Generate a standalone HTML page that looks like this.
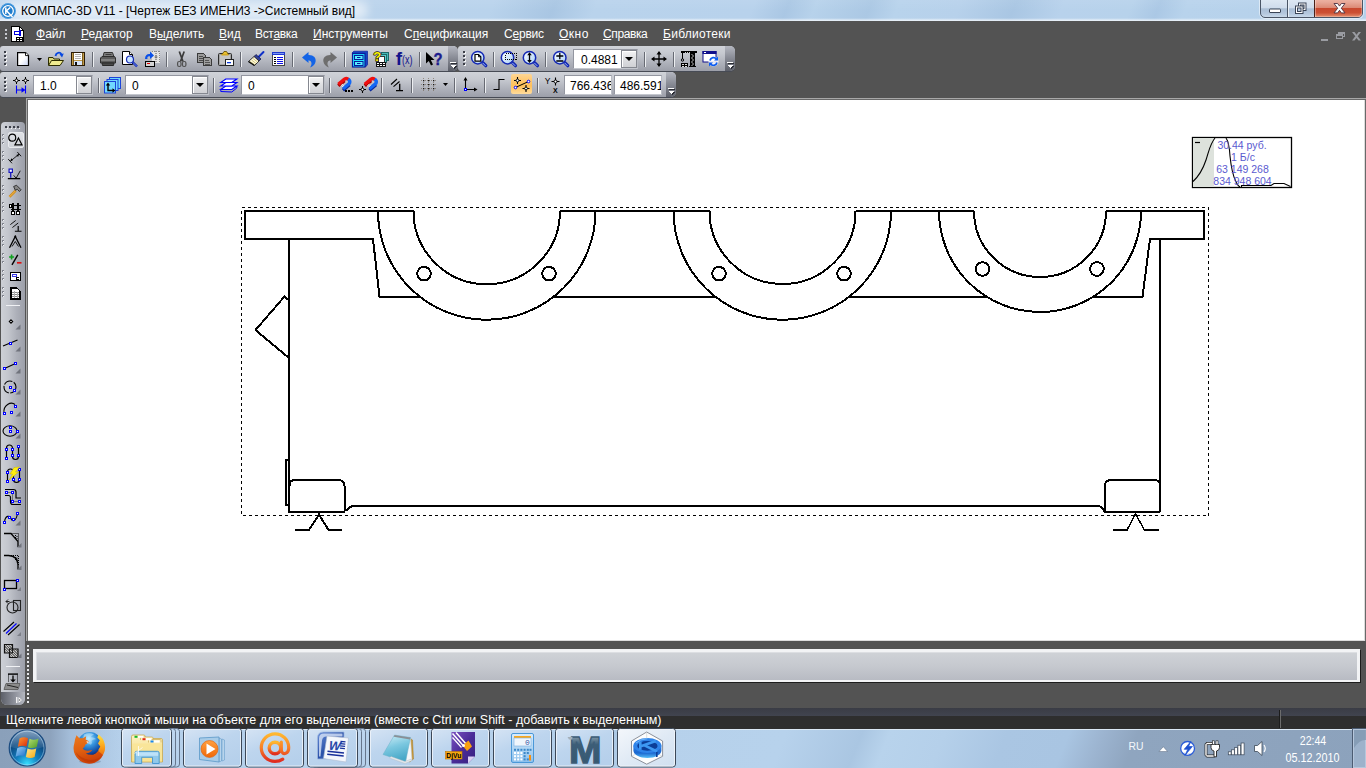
<!DOCTYPE html>
<html lang="ru">
<head>
<meta charset="utf-8">
<title>КОМПАС-3D V11</title>
<style>
html,body{margin:0;padding:0;}
body{width:1366px;height:768px;overflow:hidden;position:relative;background:#535353;font-family:"Liberation Sans","DejaVu Sans",sans-serif;}
.abs{position:absolute;}
svg{position:absolute;overflow:visible;}
#titlebar{left:0;top:0;width:1366px;height:21px;background:linear-gradient(112deg,#c3d8ee 0%,#bcd4ec 22%,#b9d3ec 36%,#a9c6e3 40.5%,#b9d3ec 43.5%,#b8d2ec 55%,#aac7e4 57.5%,#b7d2eb 59.5%,#abc8e4 63.500%,#b8d3ec 65.500%,#b7d1eb 70%,#a9c6e3 74%,#b8d2ec 77.500%,#b7d2eb 82.500%,#abc8e5 84.500%,#b8d3ec 86.500%,#b5d0ea 100%);}
#titlebar .fade{left:0;top:0;width:1366px;height:21px;background:linear-gradient(180deg,rgba(255,255,255,0.06) 0%,rgba(255,255,255,0.0) 50%,rgba(255,255,255,0.0) 86%,rgba(255,255,255,0.6) 96%,rgba(255,255,255,0.7) 100%);}
#title{left:21px;top:3px;font-size:12px;line-height:16px;color:#000;white-space:nowrap;}
#menubar{left:0;top:21px;width:1366px;height:25px;background:#535353;}
.mi{position:absolute;top:26px;font-size:12px;line-height:16px;color:#fff;white-space:nowrap;}
.mi u{text-decoration:underline;text-underline-offset:1px;}
.tb{position:absolute;box-shadow:0 1px 0 #474b55;height:25px;border-radius:3px 5px 5px 3px;background:linear-gradient(180deg,#d0d3d9 0%,#c6c9d0 30%,#b0b3bc 65%,#9c9fa9 100%);overflow:hidden;}
.tb .ov{position:absolute;right:0;top:0;width:10px;height:25px;background:linear-gradient(180deg,#b4b7c0 0%,#8b8e98 45%,#5c5f69 100%);}
.grip{position:absolute;width:3px;height:16px;background:repeating-linear-gradient(180deg,#f4f5f7 0px,#f4f5f7 2px,transparent 2px,transparent 4px);background-position:1px 1px;background-repeat:no-repeat;background-size:2px 15px;}
.grip:after{content:"";position:absolute;left:0;top:0;width:2px;height:14px;background:repeating-linear-gradient(180deg,#3c3f48 0px,#3c3f48 2px,transparent 2px,transparent 4px);}
.gripl{position:absolute;width:2px;height:10px;background:repeating-linear-gradient(180deg,#c8cad0 0px,#c8cad0 2px,transparent 2px,transparent 4px);}
.sep{position:absolute;width:1px;height:15px;background:#676a73;box-shadow:1px 0 0 #eceef1;}
.combo{position:absolute;height:20px;background:#fff;border:1px solid #9396a0;border-right-color:#b9bcc4;border-bottom-color:#c4c7ce;box-sizing:border-box;font-size:12px;line-height:20px;color:#000;white-space:nowrap;overflow:hidden;}
.combo span{position:absolute;top:0;}
.cbtn{position:absolute;right:0;top:0;width:14px;height:16px;background:linear-gradient(180deg,#f4f4f5,#dedfe2 50%,#d0d1d5);border:1px solid #858890;box-shadow:inset 1px 1px 0 #fff;}
.cbtn:after{content:"";position:absolute;left:3px;top:6px;border:4px solid transparent;border-top:4px solid #000;border-bottom:0;}
#canvas{left:28px;top:100px;width:1336px;height:540px;background:#fff;}
#lefttb{left:1px;top:122px;width:24px;height:583px;border-radius:4px 4px 6px 6px;background:linear-gradient(90deg,#cdd0d6 0%,#c3c6cd 30%,#adb0b9 65%,#9c9fa9 100%);overflow:hidden;}
#bottom{left:0;top:641px;width:1366px;height:68px;background:#535353;}
#panel{left:33px;top:649px;width:1327px;height:33px;box-sizing:border-box;border:3px solid #f2f3f5;border-bottom-width:2px;box-shadow:inset 1px 1px 0 #dcdee2,1px 1px 0 #1c1c1c;background:linear-gradient(180deg,#cfd2d7 0%,#c6c9cf 50%,#b8bbc3 100%);}
#status1{left:0;top:708px;width:1366px;height:8px;background:linear-gradient(180deg,#3a3c45,#41444f);}
#status2{left:0;top:716px;width:1366px;height:13px;background:#2e2e2e;}
#statustext{left:6px;top:712px;font-size:12.5px;line-height:16px;color:#fff;white-space:nowrap;}
#taskbar{left:0;top:729px;width:1366px;height:39px;background:linear-gradient(112deg,#b4cfea 0%,#b7d1eb 30%,#b5d0ea 40%,#aac6e2 44%,#b6d1eb 47%,#b7d2ec 57%,#aac6e2 62.500%,#b8d3ec 64.500%,#b5d0ea 68.500%,#aac6e3 73%,#a9c5e2 77.500%,#9cb4d0 80%,#8fa5bf 82.500%,#8ca2bc 100%);border-top:1px solid #dbe8f5;box-sizing:border-box;}
</style>
</head>
<body>
<svg width="0" height="0" style="left:0;top:0"><defs>
<linearGradient id="gpage" x1="0" y1="0" x2="1" y2="1"><stop offset="0" stop-color="#fff"/><stop offset="0.5" stop-color="#fff"/><stop offset="1" stop-color="#c8d4f4"/></linearGradient>
<linearGradient id="glens" x1="0" y1="0" x2="1" y2="1"><stop offset="0" stop-color="#fff"/><stop offset="1" stop-color="#a8d0f8"/></linearGradient>
<linearGradient id="gov" x1="0" y1="0" x2="0" y2="1"><stop offset="0" stop-color="#ffe7b0"/><stop offset="0.5" stop-color="#ffd078"/><stop offset="1" stop-color="#ffc050"/></linearGradient>
</defs></svg>
<!-- TITLE BAR -->
<div id="titlebar" class="abs"><div class="fade abs"></div></div>
<div class="abs titleglow" style="left:6px;top:1px;width:362px;height:19px;border-radius:10px;background:rgba(255,255,255,0.55);filter:blur(5px)"></div>
<div id="title" class="abs">КОМПАС-3D V11 - [Чертеж БЕЗ ИМЕНИ3 -&gt;Системный вид]</div>
<!-- app logo -->
<svg style="left:0px;top:3px" width="16" height="16" viewBox="0 0 16 16">
<circle cx="8" cy="8" r="7.700" fill="#1f7ccc"/><circle cx="8" cy="8" r="7.300" fill="none" stroke="#58a8e8" stroke-width="0.800"/>
<circle cx="8" cy="8" r="5.300" fill="none" stroke="#fff" stroke-width="1.300"/>
<path d="M5.800 4.500v6.500M6 8.200l4.200-3.700M6.500 7.800l6 6.200" stroke="#fff" stroke-width="1.500" fill="none"/>
</svg>
<!-- window buttons -->
<div class="abs" style="left:1260px;top:-4px;width:103px;height:22px;border:1px solid #4a5566;border-radius:0 0 5px 5px;box-sizing:border-box;background:linear-gradient(180deg,#e2ebf5 0%,#cfdcec 54%,#aabed5 59%,#b4c7dd 82%,#c9d9ea 100%);box-shadow:0 0 0 1px rgba(255,255,255,0.5);"></div>
<div class="abs" style="left:1287px;top:0;width:1px;height:17px;background:#4a5566"></div>
<div class="abs" style="left:1288px;top:0;width:1px;height:17px;background:#e8eff7"></div>
<div class="abs" style="left:1314px;top:0;width:1px;height:17px;background:#4a2018"></div>
<div class="abs" style="left:1315px;top:-4px;width:47px;height:21px;border-radius:0 0 4px 0;background:linear-gradient(180deg,#f4c0b0 0%,#e8a898 30%,#dc8a76 55%,#c8482e 59%,#cc5034 80%,#e49070 100%);box-shadow:inset 1px 0 0 rgba(255,255,255,0.35),inset -1px -1px 0 rgba(255,255,255,0.25);"></div>
<svg style="left:1260px;top:0" width="103" height="18" viewBox="0 0 103 18">
<rect x="9.500" y="9" width="11" height="3.500" rx="0.500" fill="#fff" stroke="#3a4456"/>
<rect x="38.500" y="3" width="7.500" height="7.500" fill="#fff" stroke="#3a4456"/><rect x="40.500" y="5" width="3.500" height="3.500" fill="#c4d3e4" stroke="#3a4456"/>
<rect x="35.500" y="6" width="7.500" height="7.500" fill="#fff" stroke="#3a4456"/><rect x="37.500" y="8" width="3.500" height="3.500" fill="#b9cbe0" stroke="#3a4456"/>
<path d="M74 3.500h3.600l1.900 2.600 1.900-2.600h3.600l-3.700 4.700 3.700 4.700h-3.600l-1.900-2.600-1.900 2.600h-3.600l3.700-4.700z" fill="#fff" stroke="#4a3040" stroke-width="0.900"/>
</svg>
<!-- MENU -->
<div id="menubar" class="abs"></div>
<div class="gripl" style="left:5px;top:29px"></div>
<svg style="left:11px;top:26px" width="13" height="16" viewBox="0 0 13 15" preserveAspectRatio="none" shape-rendering="crispEdges">
<path d="M0.5 0.5h8l4 4v10h-12z" fill="#fff" stroke="#000"/><path d="M8.500 0.500v4h4" fill="#fff" stroke="#000"/>
<rect x="3" y="5" width="6" height="3" fill="#fff" stroke="#0000e0"/><rect x="8" y="4" width="2" height="5" fill="#0000e0"/>
<rect x="5" y="10" width="7" height="4" fill="#000"/><rect x="6" y="11" width="2" height="1" fill="#fff"/><rect x="9" y="11" width="2" height="1" fill="#fff"/><rect x="6" y="13" width="2" height="1" fill="#fff"/><rect x="9" y="13" width="2" height="1" fill="#fff"/>
</svg>
<div class="mi" style="left:36px"><u>Ф</u>айл</div>
<div class="mi" style="left:81px"><u>Р</u>едактор</div>
<div class="mi" style="left:149px">В<u>ы</u>делить</div>
<div class="mi" style="left:219px"><u>В</u>ид</div>
<div class="mi" style="left:255px;letter-spacing:-0.330px">Вст<u>а</u>вка</div>
<div class="mi" style="left:313px"><u>И</u>нструменты</div>
<div class="mi" style="left:404px">С<u>п</u>ецификация</div>
<div class="mi" style="left:504px;letter-spacing:-0.200px">С<u>е</u>рвис</div>
<div class="mi" style="left:559px;letter-spacing:0.500px"><u>О</u>кно</div>
<div class="mi" style="left:603px;letter-spacing:-0.400px"><u>С</u>правка</div>
<div class="mi" style="left:663px;letter-spacing:0.280px"><u>Б</u>иблиотеки</div>
<!-- MDI buttons -->
<svg style="left:1318px;top:30px" width="48" height="12" viewBox="0 0 48 12" shape-rendering="crispEdges">
<rect x="3" y="9" width="7" height="2" fill="#9a9ca2"/>
<rect x="20.500" y="2.500" width="6" height="4" fill="none" stroke="#9a9ca2"/><rect x="20" y="2" width="7" height="2" fill="#9a9ca2"/>
<rect x="18.500" y="4.500" width="6" height="4" fill="#535353" stroke="#9a9ca2"/><rect x="18" y="4" width="7" height="2" fill="#9a9ca2"/>
<path d="M34 2h2.500l2 2.700 2-2.700h2.500l-3.300 4.300 3.300 4.300h-2.500l-2-2.700-2 2.700h-2.500l3.300-4.300z" fill="#9a9ca2" shape-rendering="auto"/>
</svg>
<!-- TOOLBARS ROW 1 -->
<div class="tb" style="left:0;top:46px;width:458px"><div class="ov"></div></div>
<div class="tb" style="left:458px;top:46px;width:277px"><div class="ov"></div></div>
<div class="tb" style="left:0;top:72px;width:676px"><div class="ov"></div></div>
<div class="grip" style="left:4px;top:51px"></div>
<div class="grip" style="left:463px;top:51px"></div>
<div class="grip" style="left:4px;top:77px"></div>
<!-- overflow glyphs -->
<svg style="left:450px;top:62px" width="8" height="8" viewBox="0 0 8 8" shape-rendering="crispEdges"><rect x="1" y="1" width="6" height="1" fill="#2a2c33"/><path d="M1 4h6l-3 3z" fill="#2a2c33"/><rect x="0" y="0" width="6" height="1" fill="#fff"/><path d="M0 3h6l-3 3z" fill="#fff"/></svg>
<svg style="left:727px;top:62px" width="8" height="8" viewBox="0 0 8 8" shape-rendering="crispEdges"><rect x="1" y="1" width="6" height="1" fill="#2a2c33"/><path d="M1 4h6l-3 3z" fill="#2a2c33"/><rect x="0" y="0" width="6" height="1" fill="#fff"/><path d="M0 3h6l-3 3z" fill="#fff"/></svg>
<svg style="left:668px;top:88px" width="8" height="8" viewBox="0 0 8 8" shape-rendering="crispEdges"><rect x="1" y="1" width="6" height="1" fill="#2a2c33"/><path d="M1 4h6l-3 3z" fill="#2a2c33"/><rect x="0" y="0" width="6" height="1" fill="#fff"/><path d="M0 3h6l-3 3z" fill="#fff"/></svg>
<!-- separators row1 -->
<div class="sep" style="left:92px;top:52px"></div>
<div class="sep" style="left:166px;top:52px"></div>
<div class="sep" style="left:240px;top:52px"></div>
<div class="sep" style="left:292px;top:52px"></div>
<div class="sep" style="left:344px;top:52px"></div>
<div class="sep" style="left:419px;top:52px"></div>
<div class="sep" style="left:493px;top:52px"></div>
<div class="sep" style="left:545px;top:52px"></div>
<div class="sep" style="left:644px;top:52px"></div>
<div class="sep" style="left:673px;top:52px"></div>
<!-- separators row2 -->
<div class="sep" style="left:98px;top:78px"></div>
<div class="sep" style="left:213px;top:78px"></div>
<div class="sep" style="left:329px;top:78px"></div>
<div class="sep" style="left:381px;top:78px"></div>
<div class="sep" style="left:411px;top:78px"></div>
<div class="sep" style="left:454px;top:78px"></div>
<div class="sep" style="left:484px;top:78px"></div>
<div class="sep" style="left:537px;top:78px"></div>
<!-- combos -->
<div class="combo" style="left:573px;top:49px;width:65px"><span style="left:7px">0.4881</span><div class="cbtn"></div></div>
<div class="combo" style="left:33px;top:75px;width:60px"><span style="left:6px">1.0</span><div class="cbtn"></div></div>
<div class="combo" style="left:125px;top:75px;width:84px"><span style="left:6px">0</span><div class="cbtn"></div></div>
<div class="combo" style="left:241px;top:75px;width:84px"><span style="left:6px">0</span><div class="cbtn"></div></div>
<div class="combo" style="left:564px;top:75px;width:48px"><span style="left:5px">766.436</span></div>
<div class="combo" style="left:614px;top:75px;width:48px"><span style="left:5px">486.591</span></div>
<!-- ROW1 ICONS -->
<!-- new -->
<svg style="left:17px;top:52px" width="12" height="14" viewBox="0 0 12 14"><path d="M0.600 0.600h8l2.900 2.900v10h-10.900z" fill="url(#gpage)" stroke="#000" stroke-width="1.200"/><path d="M8.500 0.600v3h3" fill="#fff" stroke="#000" stroke-width="0.900"/></svg>
<svg style="left:37px;top:58px" width="5" height="3" viewBox="0 0 5 3"><path d="M0 0h5l-2.500 3z" fill="#000"/></svg>
<!-- open -->
<svg style="left:48px;top:51px" width="16" height="15" viewBox="0 0 16 15">
<path d="M0.500 14V6.500h4.500l1 1.500h5.500v2" fill="#d8d478" stroke="#2c2c00"/>
<path d="M0.500 14.500l3-5h12l-3.500 5z" fill="#f0ec90" stroke="#2c2c00"/>
<path d="M7.500 5C8 1.500 12 0.500 13.500 3.500" fill="none" stroke="#0848e0" stroke-width="1.800"/>
<path d="M11.500 3.200l4.300-0.700-1.800 4z" fill="#0848e0"/>
</svg>
<!-- save -->
<svg style="left:71px;top:52px" width="14" height="14" viewBox="0 0 14 14" shape-rendering="crispEdges">
<rect x="0.500" y="0.500" width="13" height="13" fill="#c09a48" stroke="#2a1c08"/>
<rect x="3" y="1" width="8" height="7" fill="#fff"/><rect x="4" y="2" width="6" height="1" fill="#b0b0b0"/><rect x="4" y="4" width="6" height="1" fill="#b0b0b0"/><rect x="4" y="6" width="6" height="1" fill="#b0b0b0"/>
<rect x="3" y="9" width="8" height="4" fill="#d8e4f8"/><rect x="4" y="10" width="2" height="3" fill="#101010"/>
<rect x="2" y="1" width="1" height="12" fill="#7a5c20"/><rect x="11" y="1" width="1" height="12" fill="#7a5c20"/>
</svg>
<!-- print -->
<svg style="left:100px;top:52px" width="16" height="14" viewBox="0 0 16 14">
<path d="M4 0.500h8.500l1.500 4.500h-11z" fill="#7e7e7e" stroke="#333"/><rect x="5.500" y="2" width="6" height="1" fill="#3c3c3c"/>
<path d="M2 4.500h12.500l1 1.500v5h-15v-5z" fill="#5c5c5c" stroke="#2e2e2e"/>
<rect x="1" y="7.500" width="14" height="1" fill="#a4a4a4"/>
<path d="M2 11h12l-0.500 2.500h-11z" fill="#484848" stroke="#2a2a2a"/>
</svg>
<!-- preview -->
<svg style="left:122px;top:51px" width="17" height="16" viewBox="0 0 17 16">
<path d="M0.500 0.500h7l3 3v10h-10z" fill="#fff" stroke="#000"/><path d="M7.500 0.500v3h3" fill="#fff" stroke="#000"/>
<circle cx="8" cy="8.500" r="3.500" fill="#c8e4ff" stroke="#1428b4" stroke-width="1.200"/>
<path d="M10.500 11l4.500 4.500" stroke="#1428b4" stroke-width="2.400"/><path d="M11 11.500l4 4" stroke="#7aa0f0" stroke-width="0.800"/>
</svg>
<!-- export -->
<svg style="left:144px;top:51px" width="16" height="16" viewBox="0 0 16 16">
<rect x="8" y="0" width="8" height="12" fill="#e4e4e4"/><path d="M12 0v12" stroke="#555" stroke-dasharray="1 1"/><path d="M8 0.500h8M15.500 0v12" stroke="#888" stroke-dasharray="1 1"/><path d="M10.500 6h3M12 4.500v3" stroke="#666" stroke-width="0.800"/>
<path d="M1 8C1 4 3.500 2.500 6 3V0.500L10 4.500 6 8V5.500C4 5 3 6 3.500 8z" fill="#0a50e8"/>
<rect x="1.500" y="10.500" width="9" height="5" fill="#d4d4d4" stroke="#000"/><rect x="3" y="12" width="3" height="1" fill="#e00000"/>
</svg>
<!-- cut -->
<svg style="left:0;top:0" width="300" height="72" viewBox="0 0 300 72">
<path d="M179.300 51.500L183 61.500M184.200 51.500L180.500 61.500" stroke="#3a3a3a" stroke-width="1.700" fill="none"/>
<rect x="177.600" y="61.500" width="3.400" height="5" rx="1.500" fill="none" stroke="#505050" stroke-width="1.200"/><rect x="182.500" y="61.500" width="3.400" height="5" rx="1.500" fill="none" stroke="#505050" stroke-width="1.200"/>
</svg>
<!-- copy -->
<svg style="left:197px;top:53px" width="16" height="13" viewBox="0 0 16 13" shape-rendering="crispEdges">
<path d="M0.500 0.500h6l2 2v6.500h-8z" fill="#9a9a9a" stroke="#3a3a3a"/><rect x="2" y="3" width="4" height="1" fill="#4a4a4a"/><rect x="2" y="5" width="5" height="1" fill="#4a4a4a"/><rect x="2" y="7" width="5" height="1" fill="#4a4a4a"/>
<path d="M6.500 4.500h6l2 2v6h-8z" fill="#a0a0a0" stroke="#3a3a3a"/><rect x="8" y="7" width="4" height="1" fill="#555"/><rect x="8" y="9" width="5" height="1" fill="#555"/><rect x="8" y="11" width="5" height="1" fill="#555"/>
</svg>
<!-- paste -->
<svg style="left:218px;top:51px" width="16" height="16" viewBox="0 0 16 16">
<rect x="0.500" y="2.500" width="13" height="12" rx="1" fill="#a4a4a4" stroke="#2c2c2c"/><rect x="2" y="4" width="10" height="9" fill="#c4c4c4"/>
<path d="M4 3.500L6 0.500h2.500l2 3z" fill="#e8c030" stroke="#5a4400" stroke-width="0.800"/><rect x="3.500" y="3" width="7" height="1.500" fill="#d4a820"/>
<rect x="7.500" y="8.500" width="8" height="6" fill="#fff" stroke="#222"/><rect x="9" y="11" width="4" height="1.300" fill="#0838d8"/>
</svg>
<!-- brush -->
<svg style="left:248px;top:51px" width="17" height="15" viewBox="0 0 17 15">
<path d="M15.500 1L10.500 6" stroke="#1030c8" stroke-width="1.900" stroke-linecap="round"/>
<path d="M8 3.500l5 4.500-2 2-5-4.500z" fill="#30409a" stroke="#101040" stroke-width="0.700"/>
<path d="M6 5.500l5 4.500-4.500 4.500-6-4z" fill="#fffbe0" stroke="#222" stroke-width="0.900"/>
<path d="M2 10.500l4.500 3M3.500 9l4.500 3.500M5 7.500l4.500 3.500" stroke="#c8b860" stroke-width="0.800"/>
<path d="M0.500 10.500l6 4" stroke="#111" stroke-width="1.500"/>
</svg>
<!-- list -->
<svg style="left:272px;top:52px" width="13" height="14" viewBox="0 0 13 14" shape-rendering="crispEdges">
<rect x="0.500" y="0.500" width="12" height="13" fill="#fff" stroke="#444"/><rect x="0" y="0" width="13" height="3" fill="#2038d0"/><rect x="1" y="1" width="11" height="1" fill="#7c98f0"/>
<rect x="2" y="5" width="2" height="1" fill="#000"/><rect x="5" y="5" width="6" height="1" fill="#1010e8"/>
<rect x="2" y="7" width="2" height="1" fill="#000"/><rect x="5" y="7" width="6" height="1" fill="#1010e8"/>
<rect x="2" y="9" width="2" height="1" fill="#000"/><rect x="5" y="9" width="6" height="1" fill="#1010e8"/>
<rect x="2" y="11" width="2" height="1" fill="#000"/><rect x="5" y="11" width="6" height="1" fill="#1010e8"/>
</svg>
<!-- undo / redo -->
<svg style="left:302px;top:52px" width="15" height="16" viewBox="0 0 15 16"><path d="M0 5.500L6.500 0V3C11.500 2.800 14.500 6 13.500 10 12.800 12.800 10.500 14.800 8 15.500 10 13 10.500 9 6.500 8.300V11z" fill="#1464e6"/></svg>
<svg style="left:322px;top:52px" width="15" height="16" viewBox="0 0 15 16"><path d="M15 5.500L8.500 0V3C3.500 2.800 0.500 6 1.500 10 2.200 12.800 4.500 14.800 7 15.500 5 13 4.500 9 8.500 8.300V11z" fill="#6e6e6e"/></svg>
<!-- cabinet -->
<svg style="left:0;top:0" width="460" height="72" viewBox="0 0 460 72">
<path d="M352 53l1.800-1.800h13.700v13.500l-2 2.300z" fill="#1446c4" stroke="#0a1a9c" stroke-width="0.700"/>
<rect x="352.500" y="53.500" width="12.500" height="13.500" fill="#20e4ff" stroke="#0a1a9c" stroke-width="1.200"/>
<rect x="354.500" y="55.500" width="8.500" height="4" fill="#58f0ff" stroke="#0a1a9c"/><rect x="354.500" y="61.500" width="8.500" height="4" fill="#58f0ff" stroke="#0a1a9c"/>
<path d="M357 57.500h3.500M357 63.500h3.500" stroke="#0a1a9c" stroke-width="1.100"/>
</svg>
<!-- help -->
<svg style="left:373px;top:50px" width="17" height="17" viewBox="0 0 17 17">
<rect x="8.500" y="2.500" width="7" height="8" fill="#48b8b8" stroke="#206868"/><rect x="6.500" y="4.500" width="7" height="8" fill="#58d0d0" stroke="#206868"/>
<rect x="5.500" y="6.500" width="6" height="6" fill="#fff" stroke="#333"/>
<g shape-rendering="crispEdges"><rect x="3" y="12" width="10" height="5" fill="#111"/><rect x="4" y="13" width="2" height="1" fill="#fff"/><rect x="7" y="13" width="2" height="1" fill="#fff"/><rect x="10" y="13" width="2" height="1" fill="#fff"/><rect x="4" y="15" width="2" height="1" fill="#fff"/><rect x="7" y="15" width="2" height="1" fill="#fff"/><rect x="10" y="15" width="2" height="1" fill="#fff"/></g>
<text x="0.300" y="10.500" font-family="Liberation Sans,sans-serif" font-weight="bold" font-size="13" fill="#222" stroke="#222" stroke-width="1.400" stroke-linejoin="round">?</text><text x="0.300" y="10.500" font-family="Liberation Sans,sans-serif" font-weight="bold" font-size="13" fill="#fff200">?</text>
</svg>
<!-- f(x) -->
<svg style="left:396px;top:50px" width="18" height="18" viewBox="0 0 18 18"><text x="-0.300" y="14.500" font-family="Liberation Sans,sans-serif" font-weight="bold" font-size="19" fill="#14148c">f</text><text x="6" y="14" font-family="Liberation Sans,sans-serif" font-size="12.500" fill="#14148c" textLength="10.500" lengthAdjust="spacingAndGlyphs">(x)</text></svg>
<!-- arrow ? -->
<svg style="left:425px;top:51px" width="18" height="16" viewBox="0 0 18 16"><path d="M1 1v11.500l2.800-2.600 2.200 4.600 2-1-2.200-4.500h3.700z" fill="#000"/><text x="8.500" y="13.500" font-family="Liberation Sans,sans-serif" font-weight="bold" font-size="16" fill="#1c1c8c" stroke="#1c1c8c" stroke-width="0.400" textLength="9" lengthAdjust="spacingAndGlyphs">?</text></svg>
<!-- zoom page -->
<svg style="left:0;top:0" width="760" height="72" viewBox="0 0 760 72"><circle cx="477.8" cy="57.7" r="6.200" fill="url(#glens)" stroke="#1428b4" stroke-width="1.500"/><path d="M482.8 62.7l3 3" stroke="#1428b4" stroke-width="3.200" stroke-linecap="round"/><path d="M482.6 62.9l3 3" stroke="#9ab8f4" stroke-width="1"/><path d="M475 54.500h3.500l2.300 2.300v4.400h-5.800z" fill="#fff" stroke="#000" stroke-width="1.200"/><path d="M478.500 54.500v2.300h2.300" fill="none" stroke="#000" stroke-width="0.900"/></svg>
<!-- zoom window -->
<svg style="left:0;top:0" width="760" height="72" viewBox="0 0 760 72"><circle cx="507.5" cy="57.7" r="6.200" fill="url(#glens)" stroke="#1428b4" stroke-width="1.500"/><path d="M512.5 62.7l3 3" stroke="#1428b4" stroke-width="3.200" stroke-linecap="round"/><path d="M512.3 62.9l3 3" stroke="#9ab8f4" stroke-width="1"/><rect x="505.500" y="53.500" width="11" height="6" fill="none" stroke="#000" stroke-width="1" stroke-dasharray="1 1" shape-rendering="crispEdges"/></svg>
<!-- zoom vertical -->
<svg style="left:0;top:0" width="760" height="72" viewBox="0 0 760 72"><circle cx="529.5" cy="57.7" r="6.200" fill="url(#glens)" stroke="#1428b4" stroke-width="1.500"/><path d="M534.5 62.7l3 3" stroke="#1428b4" stroke-width="3.200" stroke-linecap="round"/><path d="M534.3 62.9l3 3" stroke="#9ab8f4" stroke-width="1"/><path d="M529.500 54v7.500" stroke="#000" stroke-width="1.300"/><path d="M529.500 52.300l-2.300 3h4.600zM529.500 63l-2.300-3h4.600z" fill="#000"/></svg>
<!-- zoom +- -->
<svg style="left:0;top:0" width="760" height="72" viewBox="0 0 760 72"><circle cx="559.8" cy="57.7" r="6.200" fill="url(#glens)" stroke="#1428b4" stroke-width="1.500"/><path d="M564.8 62.7l3 3" stroke="#1428b4" stroke-width="3.200" stroke-linecap="round"/><path d="M564.6 62.9l3 3" stroke="#9ab8f4" stroke-width="1"/><path d="M556.300 56h7M559.800 52.700v6.600M556.300 61h7" stroke="#000" stroke-width="1.300"/></svg>
<!-- move -->
<svg style="left:651px;top:51px" width="16" height="16" viewBox="0 0 16 16"><path d="M8 1.500v13M1.500 8h13" stroke="#000" stroke-width="1.300"/><path d="M8 0l-2.500 3.500h5zM8 16l-2.500-3.500h5zM0 8l3.500-2.500v5zM16 8l-3.500-2.500v5z" fill="#000"/></svg>
<!-- crane -->
<svg style="left:680px;top:51px" width="17" height="16" viewBox="0 0 17 16" shape-rendering="crispEdges">
<rect x="1" y="0" width="16" height="2" fill="#000"/><rect x="10" y="2" width="5" height="14" fill="#000"/><rect x="9" y="15" width="7" height="1" fill="#000"/>
<path d="M11.500 3l2 2-2 2 2 2-2 2 2 2-2 2" stroke="#d0d0d0" fill="none" stroke-width="0.900" shape-rendering="auto"/>
<path d="M5 1.500h6" stroke="#ccc" stroke-dasharray="1 1"/>
<rect x="2" y="2" width="1" height="6" fill="#000"/><circle cx="2.500" cy="9" r="1.200" fill="none" stroke="#000" shape-rendering="auto"/>
<rect x="1" y="12" width="7" height="4" fill="#000"/><rect x="2" y="13" width="2" height="1" fill="#ddd"/><rect x="5" y="13" width="2" height="1" fill="#ddd"/><rect x="2" y="15" width="2" height="1" fill="#ddd"/><rect x="5" y="15" width="2" height="1" fill="#ddd"/>
</svg>
<!-- window refresh -->
<svg style="left:702px;top:51px" width="17" height="16" viewBox="0 0 17 16">
<rect x="1" y="0.500" width="13" height="10.500" fill="#fff" stroke="#10108c"/><rect x="0.500" y="0" width="14" height="3" fill="#10108c"/><rect x="2" y="1" width="2" height="1" fill="#fff"/>
<circle cx="11.500" cy="10.500" r="5" fill="#fff" opacity="0.850"/>
<path d="M8 9.500A3.700 3.700 0 0 1 14.500 8" fill="none" stroke="#0c5cf0" stroke-width="1.800"/><path d="M16 5.500v4h-4z" fill="#0c5cf0"/>
<path d="M15 11.500A3.700 3.700 0 0 1 8.500 13" fill="none" stroke="#0c5cf0" stroke-width="1.800"/><path d="M7 15.500v-4h4z" fill="#0c5cf0"/>
</svg>
<!-- ROW2 ICONS -->
<!-- snap step -->
<svg style="left:13px;top:77px" width="17" height="17" viewBox="0 0 17 17">
<path d="M0 3.500h7M3.500 0v7M9 3.500h7M12.500 0v7" stroke="#000" stroke-width="1"/><circle cx="3.500" cy="3.500" r="1.500" fill="#fff" stroke="#000"/><circle cx="12.500" cy="3.500" r="1.500" fill="#fff" stroke="#000"/>
<path d="M3.500 8.500v8M12.500 8.500v8M3.500 13h6" stroke="#0000ff" stroke-width="1.100"/><path d="M12.500 13l-4-2.700v5.400z" fill="#0000ff"/>
</svg>
<!-- views -->
<svg style="left:104px;top:77px" width="17" height="17" viewBox="0 0 17 17">
<rect x="5.500" y="0.500" width="11" height="11" fill="#70d8ff" stroke="#1c44d8"/><rect x="3" y="2.500" width="11" height="11" fill="#70d8ff" stroke="#1c44d8"/><rect x="0.500" y="4.500" width="11" height="11.500" fill="#70d8ff" stroke="#1c44d8"/>
<path d="M4 7.500v6h6" fill="none" stroke="#000" stroke-width="1.400"/><path d="M4 5.500l-2.200 3h4.400zM11.500 13.500l-3-2.200v4.400z" fill="#000"/>
</svg>
<!-- layers -->
<svg style="left:220px;top:78px" width="18" height="15" viewBox="0 0 18 15">
<path d="M0.800 11.500l5-3.500h11l-5 3.500z" fill="#fff" stroke="#0000ff" stroke-width="1.200"/>
<path d="M0.800 8l5-3.500h11l-5 3.500z" fill="#fff" stroke="#0000ff" stroke-width="1.200"/>
<path d="M0.800 4.500l5-3.500h11l-5 3.500z" fill="#fff" stroke="#0000ff" stroke-width="1.200"/>
<path d="M0.800 11.500v2l11 0.500 5-4v-2" fill="none" stroke="#0000ff" stroke-width="1"/>
</svg>
<!-- magnet 1 -->
<svg style="left:335px;top:76px" width="18" height="18" viewBox="0 0 18 18">
<path d="M3.300 9.800L9.500 4.600" stroke="#a80000" stroke-width="3.400" fill="none"/><path d="M14.500 8.800L8 14.300" stroke="#0a2a9c" stroke-width="3.400" fill="none"/>
<path d="M3.300 8.300L9.500 3.100A3.200 3.200 0 0 1 13.600 3.600" stroke="#f01010" stroke-width="3.400" fill="none"/><path d="M13.200 3.200A3.400 3.400 0 0 1 14.500 7.300L8 12.800" stroke="#1468f4" stroke-width="3.400" fill="none"/>
<path d="M5.800 9.800l2.200-1.800M7 11l2.200-1.800" stroke="#f4f4f4" stroke-width="0.900"/>
<g shape-rendering="crispEdges"><rect x="10" y="14" width="2" height="2" fill="#000"/><rect x="13" y="14" width="2" height="2" fill="#000"/><rect x="16" y="14" width="2" height="2" fill="#000"/></g>
</svg>
<!-- magnet 2 -->
<svg style="left:358px;top:76px" width="19" height="18" viewBox="0 0 19 18">
<g transform="translate(3.500 0)"><path d="M3.300 9.800L9.500 4.600" stroke="#a80000" stroke-width="3.400" fill="none"/><path d="M14.500 8.800L8 14.300" stroke="#0a2a9c" stroke-width="3.400" fill="none"/>
<path d="M3.300 8.300L9.500 3.100A3.200 3.200 0 0 1 13.600 3.600" stroke="#f01010" stroke-width="3.400" fill="none"/><path d="M13.200 3.200A3.400 3.400 0 0 1 14.500 7.300L8 12.800" stroke="#1468f4" stroke-width="3.400" fill="none"/>
<path d="M5.800 9.800l2.200-1.800M7 11l2.200-1.800" stroke="#f4f4f4" stroke-width="0.900"/></g>
<path d="M1 13.500h7M4.500 10v7" stroke="#000" stroke-width="1.100"/><circle cx="4.500" cy="13.500" r="1.400" fill="#fff" stroke="#000"/>
</svg>
<!-- angle / parallel-perp -->
<svg style="left:390px;top:78px" width="15" height="15" viewBox="0 0 15 15"><path d="M1 6.500l6-5.500M3.500 8.700l6-5.200" stroke="#000" stroke-width="1.100"/><path d="M6 12.700h7M9.700 12.700v-7" stroke="#000" stroke-width="1.300"/></svg>
<!-- grid -->
<svg style="left:420px;top:77px" width="17" height="16" viewBox="420 77 17 16"><path d="M421 80.500h15M421 84.500h15M421 88.500h15M423.500 78v13M428.500 78v13M433.500 78v13" stroke="#6a5a44" stroke-width="1" stroke-dasharray="1 1" opacity="0.550"/><g fill="#1c1a18"><rect x="423" y="80" width="1.300" height="1.300"/><rect x="428" y="80" width="1.300" height="1.300"/><rect x="433" y="80" width="1.300" height="1.300"/><rect x="423" y="84" width="1.300" height="1.300"/><rect x="428" y="84" width="1.300" height="1.300"/><rect x="433" y="84" width="1.300" height="1.300"/><rect x="423" y="88" width="1.300" height="1.300"/><rect x="428" y="88" width="1.300" height="1.300"/><rect x="433" y="88" width="1.300" height="1.300"/></g></svg>
<svg style="left:443px;top:83px" width="5" height="3" viewBox="0 0 5 3"><path d="M0 0h5l-2.500 3z" fill="#000"/></svg>
<!-- axis -->
<svg style="left:462px;top:77px" width="16" height="16" viewBox="0 0 16 16"><path d="M3.500 12V2M3.500 12.500h10" stroke="#000" stroke-width="1.100" fill="none"/><path d="M3.500 0l-2 3.500h4zM15.500 12.500l-3.500-2v4z" fill="#000"/><rect x="2.500" y="11.500" width="2" height="2" fill="#fff" stroke="#0000ff" shape-rendering="crispEdges"/></svg>
<!-- step -->
<svg style="left:493px;top:79px" width="12" height="12" viewBox="0 0 12 12"><path d="M0.500 10.500h5.500V0.500h5.500" fill="none" stroke="#000" stroke-width="1.100"/></svg>
<!-- ortho highlighted -->
<div class="abs" style="left:511px;top:74px;width:21px;height:20px;border-radius:2px;background:linear-gradient(180deg,#ffd694 0%,#ffc568 40%,#ffc15c 60%,#ffdc9c 100%);"></div>
<svg style="left:511px;top:74px" width="21" height="20" viewBox="511 74 21 20">
<path d="M515.500 87.500L528.500 81.500" stroke="#000" stroke-width="1"/>
<path d="M514 80.500h7M517.500 77v7M522.500 88.500h7M526 85v7" stroke="#000" stroke-width="1.100"/><circle cx="517.500" cy="80.500" r="1.400" fill="#fff" stroke="#000" stroke-width="0.900"/><circle cx="526" cy="88.500" r="1.400" fill="#fff" stroke="#000" stroke-width="0.900"/>
<circle cx="515.500" cy="87.500" r="1.300" fill="#fff" stroke="#0000ff"/><circle cx="528.500" cy="81.500" r="1.300" fill="#fff" stroke="#0000ff"/>
</svg>
<!-- YX -->
<svg style="left:544px;top:76px" width="17" height="18" viewBox="544 76 17 18">
<text x="544.800" y="84" font-family="Liberation Sans,sans-serif" font-size="8.500" fill="#000">Y</text>
<path d="M551.500 81.500h8M555.500 77.500v8" stroke="#000" stroke-width="1.100"/><circle cx="555.500" cy="81.500" r="1.500" fill="#fff" stroke="#000"/>
<text x="553" y="92.500" font-family="Liberation Sans,sans-serif" font-size="7" font-weight="bold" fill="#000">X</text>
</svg>
<!-- CANVAS -->
<div class="abs" style="left:26px;top:98px;width:1340px;height:543px;background:#a8a8a8"></div>
<div class="abs" style="left:27px;top:99px;width:1339px;height:542px;background:#696969"></div>
<div class="abs" style="left:28px;top:100px;width:1337px;height:541px;background:#dcdcdc"></div>
<div id="canvas" class="abs"></div>
<!-- BOTTOM -->
<div id="bottom" class="abs"></div>
<div id="panel" class="abs"></div>
<div class="abs vgrip" style="left:27px;top:645px;width:2px;height:58px;background:repeating-linear-gradient(180deg,#e8e9ec 0px,#e8e9ec 2px,transparent 2px,transparent 4px)"></div>
<div id="status1" class="abs"></div>
<div id="status2" class="abs"></div>
<div class="abs stsep" style="left:1280px;top:710px;width:1px;height:18px;background:#6c6c6c"></div><div class="abs" style="left:1279px;top:710px;width:1px;height:18px;background:#1c1c1c"></div>
<div id="statustext" class="abs">Щелкните левой кнопкой мыши на объекте для его выделения (вместе с Ctrl или Shift - добавить к выделенным)</div>
<!-- LEFT TOOLBAR -->
<div id="lefttb" class="abs"></div>
<!-- TASKBAR -->
<div id="taskbar" class="abs"></div>
<!-- DRAWING -->
<svg style="left:0;top:0" width="1366" height="768" viewBox="0 0 1366 768">
<g fill="none" stroke="#000" stroke-width="2" stroke-linejoin="miter" shape-rendering="crispEdges">
<!-- top plate -->
<path d="M413.500 211H245V239H373L379.500 297H419"/>
<path d="M289 239V512H344.500"/>
<path d="M560 211H709.500M855.500 211H974M1106 211H1204V239H1150L1142.500 297H1094"/>
<path d="M554 297H715M850 297H986"/>
<path d="M1160 239V512"/>
<!-- arcs -->
<path d="M378 211A108.750 108.750 0 0 0 595.500 211"/>
<path d="M413.500 211A73.250 73.250 0 0 0 560 211"/>
<path d="M673.500 211A108.750 108.750 0 0 0 891 211"/>
<path d="M709.500 211A73 73 0 0 0 855.500 211"/>
<path d="M939 211A101 101 0 0 0 1141 211"/>
<path d="M974 211A66 66 0 0 0 1106 211"/>
<!-- holes -->
<circle cx="424" cy="273.700" r="6.800"/><circle cx="549" cy="273.700" r="6.800"/>
<circle cx="719" cy="273.700" r="6.800"/><circle cx="844" cy="273.700" r="6.800"/>
<circle cx="982.500" cy="269" r="6.800"/><circle cx="1097" cy="269" r="6.800"/>
<!-- triangle -->
<path d="M289 300.500L284.500 296.500L255.500 330L289 358"/>
<!-- small left rect -->
<path d="M289 459.500H285.500V505H289"/>
<!-- left foot -->
<path d="M289.500 486C289.500 481.500 291.500 480 295 480H338C342.500 480 344.500 482 344.500 486V510.500L347 510 350 507 353 506H1098.500L1101 507 1103.500 510 1104.500 511.500"/>
<!-- right foot -->
<path d="M1160 484C1159 481 1157 479.800 1154 479.800H1112C1106.500 479.800 1104.500 482 1104.500 487V512H1160"/>
<!-- supports -->
<path d="M294.500 530H309L319 514.500L328.500 530H342" stroke-width="2"/>
<path d="M1112.500 530H1127L1135.500 514L1144.500 530H1159" stroke-width="1.500"/>
</g>
<!-- selection dashed frame -->
<rect x="241.500" y="207.500" width="967" height="308" fill="none" stroke="#000" stroke-width="1" stroke-dasharray="3 3" shape-rendering="crispEdges"/>
<!-- traffic widget -->
<rect x="1192.500" y="137.500" width="99" height="50" fill="#fff" stroke="#000" stroke-width="1.300"/>
<rect x="1193" y="138" width="21" height="49" fill="#dde2dc"/>
<path d="M1195 142.500h5" stroke="#000" stroke-width="1.200"/>
<path d="M1193 181.500C1199 176 1203 169 1206 160 1209 151 1210 144 1215 138" fill="none" stroke="#000" stroke-width="1.100"/>
<path d="M1226 138C1229 142 1229.500 148 1230 156 1231 166 1233 176 1236 182 1237.500 185 1239 186.500 1240 187" fill="none" stroke="#000" stroke-width="1.100"/>
<path d="M1241.500 187V185.500H1271L1274 183.500H1284L1290.500 186.500" fill="none" stroke="#000" stroke-width="1.100"/>
<g font-family="Liberation Sans,sans-serif" font-size="10.500" fill="#5a5ad0" text-anchor="middle">
<text x="1242" y="149">30.44 руб.</text>
<text x="1243" y="161">1 Б/с</text>
<text x="1242.500" y="173">63 149 268</text>
<text x="1242.500" y="185">834 948 604</text>
</g>
</svg>
<!-- LEFT TOOLBAR ICONS -->
<div class="abs" style="left:1px;top:692px;width:24px;height:13px;border-radius:0 0 6px 6px;background:linear-gradient(90deg,#5d6069 0%,#80838d 40%,#b4b7c0 100%);"></div>
<svg style="left:16px;top:696.500px" width="6" height="6.500" viewBox="0 0 7 8"><rect x="0" y="0" width="1.500" height="7.500" fill="#fff"/><path d="M3 0l4 3.750-4 3.750z" fill="#fff"/><path d="M4 2.500l1.500 1.250-1.500 1.250z" fill="#222"/></svg>
<div class="abs" style="left:5px;top:126px;width:14px;height:2px;background:repeating-linear-gradient(90deg,#3c3f48 0,#3c3f48 2px,transparent 2px,transparent 4px)"></div>
<div class="abs" style="left:6px;top:127px;width:14px;height:2px;background:repeating-linear-gradient(90deg,transparent 0,transparent 1px,#f4f5f7 1px,#f4f5f7 2px,transparent 2px,transparent 4px);clip-path:inset(1px 0 0 0)"></div>
<div class="abs" style="left:2px;top:134px;width:2px;height:10px;background:repeating-linear-gradient(180deg,#82858f 0,#82858f 2px,transparent 2px,transparent 4px)"></div><div class="abs" style="left:3px;top:135px;width:1px;height:10px;background:repeating-linear-gradient(180deg,#f4f5f7 0,#f4f5f7 1px,transparent 1px,transparent 4px)"></div>
<div class="abs" style="left:2px;top:151px;width:2px;height:10px;background:repeating-linear-gradient(180deg,#82858f 0,#82858f 2px,transparent 2px,transparent 4px)"></div><div class="abs" style="left:3px;top:152px;width:1px;height:10px;background:repeating-linear-gradient(180deg,#f4f5f7 0,#f4f5f7 1px,transparent 1px,transparent 4px)"></div>
<div class="abs" style="left:2px;top:168px;width:2px;height:10px;background:repeating-linear-gradient(180deg,#82858f 0,#82858f 2px,transparent 2px,transparent 4px)"></div><div class="abs" style="left:3px;top:169px;width:1px;height:10px;background:repeating-linear-gradient(180deg,#f4f5f7 0,#f4f5f7 1px,transparent 1px,transparent 4px)"></div>
<div class="abs" style="left:2px;top:185px;width:2px;height:10px;background:repeating-linear-gradient(180deg,#82858f 0,#82858f 2px,transparent 2px,transparent 4px)"></div><div class="abs" style="left:3px;top:186px;width:1px;height:10px;background:repeating-linear-gradient(180deg,#f4f5f7 0,#f4f5f7 1px,transparent 1px,transparent 4px)"></div>
<div class="abs" style="left:2px;top:202px;width:2px;height:10px;background:repeating-linear-gradient(180deg,#82858f 0,#82858f 2px,transparent 2px,transparent 4px)"></div><div class="abs" style="left:3px;top:203px;width:1px;height:10px;background:repeating-linear-gradient(180deg,#f4f5f7 0,#f4f5f7 1px,transparent 1px,transparent 4px)"></div>
<div class="abs" style="left:2px;top:219px;width:2px;height:10px;background:repeating-linear-gradient(180deg,#82858f 0,#82858f 2px,transparent 2px,transparent 4px)"></div><div class="abs" style="left:3px;top:220px;width:1px;height:10px;background:repeating-linear-gradient(180deg,#f4f5f7 0,#f4f5f7 1px,transparent 1px,transparent 4px)"></div>
<div class="abs" style="left:2px;top:236px;width:2px;height:10px;background:repeating-linear-gradient(180deg,#82858f 0,#82858f 2px,transparent 2px,transparent 4px)"></div><div class="abs" style="left:3px;top:237px;width:1px;height:10px;background:repeating-linear-gradient(180deg,#f4f5f7 0,#f4f5f7 1px,transparent 1px,transparent 4px)"></div>
<div class="abs" style="left:2px;top:253px;width:2px;height:10px;background:repeating-linear-gradient(180deg,#82858f 0,#82858f 2px,transparent 2px,transparent 4px)"></div><div class="abs" style="left:3px;top:254px;width:1px;height:10px;background:repeating-linear-gradient(180deg,#f4f5f7 0,#f4f5f7 1px,transparent 1px,transparent 4px)"></div>
<div class="abs" style="left:2px;top:270px;width:2px;height:10px;background:repeating-linear-gradient(180deg,#82858f 0,#82858f 2px,transparent 2px,transparent 4px)"></div><div class="abs" style="left:3px;top:271px;width:1px;height:10px;background:repeating-linear-gradient(180deg,#f4f5f7 0,#f4f5f7 1px,transparent 1px,transparent 4px)"></div>
<div class="abs" style="left:2px;top:287px;width:2px;height:10px;background:repeating-linear-gradient(180deg,#82858f 0,#82858f 2px,transparent 2px,transparent 4px)"></div><div class="abs" style="left:3px;top:288px;width:1px;height:10px;background:repeating-linear-gradient(180deg,#f4f5f7 0,#f4f5f7 1px,transparent 1px,transparent 4px)"></div>
<div class="abs" style="left:8px;top:132px;width:16px;height:16px;box-sizing:border-box;border:1px solid #e8eaed;border-radius:2px;background:linear-gradient(180deg,#dfe1e5,#cfd2d8);"></div>
<div class="abs" style="left:6px;top:305px;width:14px;height:1px;background:#f0f1f4"></div>
<div class="abs" style="left:6px;top:666px;width:14px;height:1px;background:#f0f1f4"></div>
<svg style="left:7.3px;top:133.03px" width="14.94" height="14.94" viewBox="0 0 18 18"><circle cx="6.300" cy="5.600" r="4.200" stroke="#000" fill="none" stroke-width="1.400"/><path d="M13.800 6l4.300 8.300h-8.600z" stroke="#000" fill="none" stroke-width="1.400"/></svg>
<svg style="left:7.3px;top:150.03px" width="14.94" height="14.94" viewBox="0 0 18 18"><path d="M4 13.500L14.500 5" stroke="#000" fill="none" stroke-width="1"/><path d="M1.500 11l4.500 5M12.500 2.500l4.500 5" stroke="#000" fill="none" stroke-width="1.100"/><path d="M4 13.500l1.200-3.500 2 2.400zM14.500 5l-1.200 3.500-2-2.400z" fill="#000"/></svg>
<svg style="left:7.3px;top:167.03px" width="14.94" height="14.94" viewBox="0 0 18 18"><rect x="2.500" y="2.500" width="4" height="4" fill="#fff" stroke="#1010c0" stroke-width="1.400"/><path d="M4.500 7v6" stroke="#1010c0" stroke-width="1.500"/><path d="M1 14h15" stroke="#000" stroke-width="1.600"/><path d="M8 10l3 3.500 5-9" stroke="#000" fill="none" stroke-width="1"/></svg>
<svg style="left:7.3px;top:184.03px" width="14.94" height="14.94" viewBox="0 0 18 18"><path d="M3 15.500l7.500-7.500" stroke="#d08a18" stroke-width="3"/><path d="M3 15.500l7.500-7.500" stroke="#f0c060" stroke-width="1"/><path d="M8 3l3.500-1.500 5.500 5.500-2 2-2.500-2.500-2.500 1z" fill="#888" stroke="#111" stroke-width="0.900"/></svg>
<svg style="left:0;top:0" width="32" height="720" viewBox="0 0 32 720"><g shape-rendering="crispEdges"><path d="M13 202.500V212M18 202.500V212M10 205.500H20.500M11 209.500H20.500" stroke="#000" stroke-width="1.500" fill="none"/><rect x="9" y="204" width="2.500" height="3" fill="#fff" stroke="#000"/><rect x="11.500" y="211" width="3" height="3" fill="#fff" stroke="#000"/><rect x="16.500" y="211" width="3" height="3" fill="#fff" stroke="#000"/></g></svg>
<svg style="left:7.3px;top:218.03px" width="14.94" height="14.94" viewBox="0 0 18 18"><path d="M4 8l6.500-5M6.500 11.500l7-5.500" stroke="#000" fill="none" stroke-width="1.100"/><path d="M9.500 16h8M13.500 16v-6.500" stroke="#000" fill="none" stroke-width="1.400"/></svg>
<svg style="left:0;top:0" width="32" height="720" viewBox="0 0 32 720"><path d="M9.500 247.800L15.300 236.500L21 247.800" stroke="#000" stroke-width="1.300" fill="none"/><path d="M12 246.500L15.300 241.500L18.500 246.500" stroke="#000" stroke-width="0.900" fill="none"/><circle cx="15.300" cy="236.500" r="1" fill="#000"/></svg>
<svg style="left:7.3px;top:252.03px" width="14.94" height="14.94" viewBox="0 0 18 18"><path d="M6 15.500l7-12" stroke="#000" stroke-width="1.700"/><path d="M2.500 6h6M5.500 3v6" stroke="#10a020" stroke-width="2"/><path d="M12 13h5.500" stroke="#e01010" stroke-width="2"/></svg>
<svg style="left:7.3px;top:269.03px" width="14.94" height="14.94" viewBox="0 0 18 18"><g shape-rendering="crispEdges"><rect x="4" y="4" width="12" height="10" fill="#fff" stroke="#000" stroke-width="1.600"/><rect x="6.500" y="6.500" width="5" height="2" fill="#fff" stroke="#1010e0"/><rect x="11" y="10" width="4" height="3" fill="#000"/><rect x="12" y="11" width="2" height="1" fill="#fff"/></g></svg>
<svg style="left:0;top:0" width="32" height="720" viewBox="0 0 32 720"><g shape-rendering="crispEdges"><path d="M11 288h6l3 3v8h-9z" fill="#fff" stroke="#000" stroke-width="1.400"/><path d="M12 292.500h7M12 294.500h7M12 296.500h7" stroke="#8a8a8a" stroke-width="1"/><path d="M14.500 291v7M17.500 292v6" stroke="#b0b0b0" stroke-width="1"/><path d="M10.500 299h10" stroke="#000" stroke-width="1.600"/></g></svg>
<svg style="left:3px;top:313px" width="18" height="18" viewBox="0 0 18 18"><path d="M8 6.800l1.700 1.700-1.700 1.700-1.700-1.700z" fill="#fff" stroke="#000" stroke-width="1.100"/><path d="M17.500 11.500v5h-5z" fill="#70737c"/></svg>
<svg style="left:3px;top:335px" width="18" height="18" viewBox="0 0 18 18"><path d="M0 11l14.500-6" stroke="#000" fill="none" stroke-width="1.100"/><rect x="6.5" y="7.5" width="2" height="2" fill="#fff" stroke="#0000ff" shape-rendering="crispEdges"/><path d="M17.500 11.500v5h-5z" fill="#70737c"/></svg>
<svg style="left:3px;top:357px" width="18" height="18" viewBox="0 0 18 18"><path d="M1.500 11.500l11-5" stroke="#000" fill="none" stroke-width="1.100"/><rect x="0.5" y="10.5" width="2" height="2" fill="#fff" stroke="#0000ff" shape-rendering="crispEdges"/><rect x="11.5" y="5.5" width="2" height="2" fill="#fff" stroke="#0000ff" shape-rendering="crispEdges"/><path d="M17.500 11.500v5h-5z" fill="#70737c"/></svg>
<svg style="left:3px;top:378px" width="18" height="18" viewBox="0 0 18 18"><circle cx="7" cy="9" r="6" stroke="#000" fill="none" stroke-width="1.100" stroke-dasharray="9 1.500"/><rect x="6.5" y="8.5" width="2" height="2" fill="#fff" stroke="#0000ff" shape-rendering="crispEdges"/><rect x="10.5" y="11.5" width="2" height="2" fill="#fff" stroke="#0000ff" shape-rendering="crispEdges"/><path d="M17.500 11.500v5h-5z" fill="#70737c"/></svg>
<svg style="left:3px;top:400px" width="18" height="18" viewBox="0 0 18 18"><path d="M1 13C0 5 8 1 12 4.500" stroke="#000" fill="none" stroke-width="1.100"/><rect x="0.5" y="12.5" width="2" height="2" fill="#fff" stroke="#0000ff" shape-rendering="crispEdges"/><rect x="7.5" y="11.5" width="2" height="2" fill="#fff" stroke="#0000ff" shape-rendering="crispEdges"/><rect x="11.5" y="5.5" width="2" height="2" fill="#fff" stroke="#0000ff" shape-rendering="crispEdges"/><path d="M17.500 11.500v5h-5z" fill="#70737c"/></svg>
<svg style="left:3px;top:422px" width="18" height="18" viewBox="0 0 18 18"><ellipse cx="7" cy="9" rx="7" ry="5.200" stroke="#000" fill="none" stroke-width="1.100"/><rect x="6.5" y="4.5" width="2" height="2" fill="#fff" stroke="#0000ff" shape-rendering="crispEdges"/><rect x="6.5" y="8.5" width="2" height="2" fill="#fff" stroke="#0000ff" shape-rendering="crispEdges"/><rect x="13.5" y="8.5" width="2" height="2" fill="#fff" stroke="#0000ff" shape-rendering="crispEdges"/><path d="M17.500 11.500v5h-5z" fill="#70737c"/></svg>
<svg style="left:0;top:0" width="32" height="720" viewBox="0 0 32 720"><path d="M6.500 458.500V448a3 3 0 0 1 6 0V456.500a3 3 0 0 0 6 0V446.500" stroke="#000" stroke-width="1.200" fill="none"/><rect x="5.5" y="448.5" width="2" height="2" fill="#fff" stroke="#0000ff" shape-rendering="crispEdges"/><rect x="5.5" y="457.5" width="2" height="2" fill="#fff" stroke="#0000ff" shape-rendering="crispEdges"/><rect x="11.5" y="448.5" width="2" height="2" fill="#fff" stroke="#0000ff" shape-rendering="crispEdges"/><rect x="11.5" y="454.5" width="2" height="2" fill="#fff" stroke="#0000ff" shape-rendering="crispEdges"/><rect x="17.5" y="445.5" width="2" height="2" fill="#fff" stroke="#0000ff" shape-rendering="crispEdges"/><rect x="17.5" y="454.5" width="2" height="2" fill="#fff" stroke="#0000ff" shape-rendering="crispEdges"/><path d="M7.500 481.500V472a3 3 0 0 1 6 0V479.500a3 3 0 0 0 6 0V469.500" stroke="#000" stroke-width="1.200" fill="none"/><rect x="6.5" y="471.5" width="2" height="2" fill="#fff" stroke="#0000ff" shape-rendering="crispEdges"/><rect x="6.5" y="480.5" width="2" height="2" fill="#fff" stroke="#0000ff" shape-rendering="crispEdges"/><rect x="12.5" y="478" width="2" height="2" fill="#fff" stroke="#0000ff" shape-rendering="crispEdges"/><rect x="18.5" y="468.5" width="2" height="2" fill="#fff" stroke="#0000ff" shape-rendering="crispEdges"/><rect x="18.5" y="478" width="2" height="2" fill="#fff" stroke="#0000ff" shape-rendering="crispEdges"/><path d="M14 467.500l5.500-0.500-4 5h3l-9.500 8 3.500-6h-2.500z" fill="#ffee10" stroke="#c8b400" stroke-width="0.500"/><path d="M5 489.500h8.500a2.500 2.500 0 0 1 2.500 2.500v6h5" stroke="#000" stroke-width="1.200" fill="none"/><path d="M5 495.500h3.500a2 2 0 0 1 2 2v4.500a2.500 2.500 0 0 0 2.500 2.500h8" stroke="#000" stroke-width="1.200" fill="none"/><path d="M6.500 492.500h6v9h7" stroke="#707070" stroke-width="1" fill="none"/><rect x="5.5" y="491.5" width="2" height="2" fill="#fff" stroke="#0000ff" shape-rendering="crispEdges"/><rect x="11.5" y="491.5" width="2" height="2" fill="#fff" stroke="#0000ff" shape-rendering="crispEdges"/><rect x="11.5" y="500.5" width="2" height="2" fill="#fff" stroke="#0000ff" shape-rendering="crispEdges"/><rect x="18.5" y="500.5" width="2" height="2" fill="#fff" stroke="#0000ff" shape-rendering="crispEdges"/></svg>
<svg style="left:3px;top:509px" width="18" height="18" viewBox="0 0 18 18"><path d="M1.500 13.500C2 6 7 6 8 9.500S13 13 14.500 4.500" stroke="#000" fill="none" stroke-width="1.100"/><rect x="0.5" y="12.5" width="2" height="2" fill="#fff" stroke="#0000ff" shape-rendering="crispEdges"/><rect x="5.5" y="7.5" width="2" height="2" fill="#fff" stroke="#0000ff" shape-rendering="crispEdges"/><rect x="9.5" y="9.5" width="2" height="2" fill="#fff" stroke="#0000ff" shape-rendering="crispEdges"/><rect x="13.5" y="3.5" width="2" height="2" fill="#fff" stroke="#0000ff" shape-rendering="crispEdges"/><path d="M17.500 11.500v5h-5z" fill="#70737c"/></svg>
<svg style="left:0;top:0" width="32" height="720" viewBox="0 0 32 720"><path d="M4 533.500H11L18 541.500V547" stroke="#000" stroke-width="1.300" fill="none"/><path d="M11.500 533.500H18.500V541" stroke="#000" stroke-width="1" fill="none" stroke-dasharray="1 1"/><path d="M15.500 535v3M17 536v4" stroke="#000" stroke-width="1" stroke-dasharray="1 1"/><path d="M21.500 543v4.500h-4.500z" fill="#70737c"/><path d="M4 555.500H8.500Q18 556 18 565.500V569.500" stroke="#000" stroke-width="1.300" fill="none"/><path d="M9 555.500H18.500V565" stroke="#000" stroke-width="1" fill="none" stroke-dasharray="1 1"/><path d="M15.500 557v3M17 557.500v5" stroke="#000" stroke-width="1" stroke-dasharray="1 1"/><path d="M21.500 565.500v4.500h-4.500z" fill="#70737c"/></svg>
<svg style="left:3px;top:575px" width="18" height="18" viewBox="0 0 18 18"><rect x="1.500" y="5.500" width="12" height="8" stroke="#000" fill="none" stroke-width="1.300"/><rect x="13.5" y="4.5" width="2" height="2" fill="#fff" stroke="#0000ff" shape-rendering="crispEdges"/><rect x="0.5" y="13.5" width="2" height="2" fill="#fff" stroke="#0000ff" shape-rendering="crispEdges"/><path d="M18 12v4h-4z" fill="#7c7f88"/></svg>
<svg style="left:0;top:0" width="32" height="720" viewBox="0 0 32 720"><rect x="13.500" y="600.500" width="7" height="10" stroke="#222" fill="none" stroke-width="1.100"/><circle cx="12.500" cy="607.500" r="5.500" stroke="#222" fill="none" stroke-width="1.100"/><path d="M6 601.500h3.500M6 601.500l2-2M6 601.500l2 2" stroke="#222" stroke-width="1" fill="none"/></svg>
<svg style="left:3px;top:619px" width="18" height="18" viewBox="0 0 18 18"><path d="M0.500 12.500L11 3M5 16L16.500 5.500" stroke="#000" fill="none" stroke-width="1.100"/><path d="M3 14.500L13.500 4.500" stroke="#0000ff" stroke-width="1.100"/><path d="M18 13v4h-4z" fill="#7c7f88"/></svg>
<svg style="left:0;top:0" width="32" height="720" viewBox="0 0 32 720"><defs><clipPath id="hcl"><path d="M4.500 644.500h8v4.500h5.500v8.500h-8.500v-4.500h-5z"/></clipPath></defs><path d="M4.500 644.500h8v4.500h5.500v8.500h-8.500v-4.500h-5z" fill="#c8c8c8"/><g clip-path="url(#hcl)"><path d="M2 646l14 14M2 648.500l14 14M2 651l14 14M4.500 646l14 14M7 646l14 14M9.500 646l14 14M2 643.500l16 16M4.500 643.500l16 16M7 643.500l14 14M9.500 643.500l12 12" stroke="#4a4a4a" stroke-width="0.800"/></g><path d="M4.500 644.500h8v4.500h5.500v8.500h-8.500v-4.500h-5z" fill="none" stroke="#111" stroke-width="1.200"/><path d="M9.500 649h3v4h-3z" fill="none" stroke="#111" stroke-width="0.900"/><path d="M21.500 653.500v4.500h-4.500z" fill="#70737c"/></svg>
<svg style="left:3px;top:672px" width="18" height="18" viewBox="0 0 18 18"><path d="M5.500 2.500h9v8M5.500 2.500v8" stroke="#000" fill="none" stroke-dasharray="1 1"/><path d="M5 2h10" stroke="#000" stroke-width="1.200"/><path d="M10 3.500v5" stroke="#000" stroke-width="1.300"/><path d="M10 10.500l-2.800-3h5.600z" fill="#000"/><path d="M3 11.500h14l-2 6h-14z" fill="#8c8c8c" stroke="#555" stroke-width="0.800"/><path d="M4 13l11 2.500" stroke="#222" stroke-width="1"/></svg>
<!-- TASKBAR CONTENT -->
<div class="abs" style="left:0;top:729px;width:120px;height:39px;background:linear-gradient(90deg,#8aa0ba 0%,#8da3bd 42%,#a3bcd8 58%,rgba(179,206,233,0) 100%);"></div>
<svg style="left:0;top:728px" width="1366" height="40" viewBox="0 728 1366 40">
<defs>
<radialGradient id="orb" cx="0.5" cy="0.95" r="0.9"><stop offset="0" stop-color="#38e0ff"/><stop offset="0.35" stop-color="#1480c0"/><stop offset="0.7" stop-color="#0c4a82"/><stop offset="1" stop-color="#2a5c90"/></radialGradient>
<linearGradient id="orbhi" x1="0" y1="0" x2="0" y2="1"><stop offset="0" stop-color="#fff" stop-opacity="0.75"/><stop offset="1" stop-color="#fff" stop-opacity="0.12"/></linearGradient>
<linearGradient id="fr" x1="0" y1="0" x2="1" y2="1"><stop offset="0" stop-color="#ff9a30"/><stop offset="1" stop-color="#d8280c"/></linearGradient>
<linearGradient id="fg" x1="0" y1="0" x2="1" y2="1"><stop offset="0" stop-color="#b8e070"/><stop offset="1" stop-color="#4a9a28"/></linearGradient>
<linearGradient id="fb" x1="0" y1="0" x2="1" y2="1"><stop offset="0" stop-color="#9ad0f8"/><stop offset="1" stop-color="#1a70c8"/></linearGradient>
<linearGradient id="fy" x1="0" y1="0" x2="1" y2="1"><stop offset="0" stop-color="#ffe890"/><stop offset="1" stop-color="#f8a810"/></linearGradient>
<radialGradient id="globe" cx="0.45" cy="0.28" r="0.72"><stop offset="0" stop-color="#b4e8ff"/><stop offset="0.4" stop-color="#3a98e0"/><stop offset="0.8" stop-color="#1250a8"/><stop offset="1" stop-color="#0a2a78"/></radialGradient>
<linearGradient id="fox" x1="0" y1="0" x2="0.300" y2="1"><stop offset="0" stop-color="#ec7a1c"/><stop offset="0.550" stop-color="#e06010"/><stop offset="1" stop-color="#cc4008"/></linearGradient>
<linearGradient id="foxt" x1="0" y1="0" x2="0" y2="1"><stop offset="0" stop-color="#ffe040"/><stop offset="0.550" stop-color="#fca018"/><stop offset="1" stop-color="#e46410"/></linearGradient>
<linearGradient id="btn" x1="0" y1="0" x2="0.600" y2="1"><stop offset="0" stop-color="#d6e4f4"/><stop offset="0.500" stop-color="#bdd5ee"/><stop offset="1" stop-color="#b6d0eb"/></linearGradient>
<linearGradient id="btna" x1="0" y1="0" x2="1" y2="1"><stop offset="0" stop-color="#f4f7fb"/><stop offset="0.5" stop-color="#e0eaf5"/><stop offset="1" stop-color="#cfdff0"/></linearGradient>
<linearGradient id="mail" x1="0" y1="0" x2="0" y2="1"><stop offset="0" stop-color="#ffb830"/><stop offset="0.5" stop-color="#f88028"/><stop offset="1" stop-color="#e02c20"/></linearGradient>
<linearGradient id="mg" x1="0" y1="0" x2="0" y2="1"><stop offset="0" stop-color="#b8c4cc"/><stop offset="0.35" stop-color="#3c5e78"/><stop offset="1" stop-color="#34566e"/></linearGradient>
<linearGradient id="note" x1="0" y1="0" x2="0.3" y2="1"><stop offset="0" stop-color="#d4f0f8"/><stop offset="0.5" stop-color="#7cc8e0"/><stop offset="1" stop-color="#48a8c8"/></linearGradient>
<linearGradient id="djv" x1="0" y1="0" x2="1" y2="1"><stop offset="0" stop-color="#7a50c0"/><stop offset="0.5" stop-color="#4a2c98"/><stop offset="1" stop-color="#382080"/></linearGradient>
<linearGradient id="calc" x1="0" y1="0" x2="0" y2="1"><stop offset="0" stop-color="#d8ecfc"/><stop offset="1" stop-color="#8cc0ec"/></linearGradient>
<linearGradient id="kring" x1="0" y1="0" x2="0" y2="1"><stop offset="0" stop-color="#2a7ae0"/><stop offset="0.6" stop-color="#1c68d0"/><stop offset="1" stop-color="#58c0f8"/></linearGradient>
<linearGradient id="wordb" x1="0" y1="0" x2="1" y2="1"><stop offset="0" stop-color="#6a90d8"/><stop offset="0.5" stop-color="#2850a8"/><stop offset="1" stop-color="#88a8e0"/></linearGradient>
<linearGradient id="fold" x1="0" y1="0" x2="0" y2="1"><stop offset="0" stop-color="#fdf2c0"/><stop offset="1" stop-color="#f0d478"/></linearGradient>
<linearGradient id="wmp" x1="0" y1="0" x2="0" y2="1"><stop offset="0" stop-color="#ffa040"/><stop offset="1" stop-color="#f06808"/></linearGradient>
</defs>
<!-- buttons -->
<g stroke="#3c4858" stroke-width="1">
<rect x="129.5" y="728.500" width="50" height="38.500" rx="3" fill="url(#btn)" stroke="#66768c"/>
<rect x="125.5" y="728.500" width="50" height="38.500" rx="3" fill="url(#btn)" stroke="#66768c"/>
<rect x="121.5" y="728.500" width="50" height="38.500" rx="3" fill="url(#btn)"/>
<rect x="183.5" y="728.500" width="58" height="38.500" rx="3" fill="url(#btn)"/>
<rect x="245.5" y="728.500" width="58" height="38.500" rx="3" fill="url(#btn)"/>
<rect x="315.5" y="728.500" width="50" height="38.500" rx="3" fill="url(#btn)" stroke="#66768c"/>
<rect x="311.5" y="728.500" width="50" height="38.500" rx="3" fill="url(#btn)" stroke="#66768c"/>
<rect x="307.5" y="728.500" width="50" height="38.500" rx="3" fill="url(#btn)"/>
<rect x="369.5" y="728.500" width="58" height="38.500" rx="3" fill="url(#btn)"/>
<rect x="431.5" y="728.500" width="58" height="38.500" rx="3" fill="url(#btn)"/>
<rect x="493.5" y="728.500" width="58" height="38.500" rx="3" fill="url(#btn)"/>
<rect x="555.5" y="728.500" width="58" height="38.500" rx="3" fill="url(#btn)"/>
<rect x="617.5" y="728.500" width="58" height="38.500" rx="3" fill="url(#btna)"/>
</g>
<g stroke="#f2f6fb" stroke-width="1" fill="none" opacity="0.800">
<rect x="122.5" y="729.500" width="48" height="36.500" rx="2" />
<rect x="184.5" y="729.500" width="56" height="36.500" rx="2" />
<rect x="246.5" y="729.500" width="56" height="36.500" rx="2" />
<rect x="308.5" y="729.500" width="48" height="36.500" rx="2" />
<rect x="370.5" y="729.500" width="56" height="36.500" rx="2" />
<rect x="432.5" y="729.500" width="56" height="36.500" rx="2" />
<rect x="494.5" y="729.500" width="56" height="36.500" rx="2" />
<rect x="556.5" y="729.500" width="56" height="36.500" rx="2" />
<rect x="618.5" y="729.500" width="56" height="36.500" rx="2" />
</g>
<!-- start orb -->
<circle cx="27.200" cy="748" r="18" fill="url(#orb)" stroke="#1c4c80" stroke-width="1.200"/>
<circle cx="27.200" cy="748" r="16.800" fill="none" stroke="#a8d4f0" stroke-width="0.800" opacity="0.700"/>
<path d="M10.500 747a16.700 16.700 0 0 1 33.400 0q-16.700 5-33.400 0z" fill="url(#orbhi)" opacity="0.550"/>
<path d="M19.500 738.500q4-2.200 8.500-0.300l-1.500 8.300q-4.200-1.800-8.600 0.300z" fill="url(#fr)"/>
<path d="M29.500 738.800q4.500 2 9-0.300l-1.700 8.500q-4.500 2-8.800 0.200z" fill="url(#fg)"/>
<path d="M17.300 748.200q4.300-2.200 8.700-0.300l-1.600 8.600q-4.300-2-8.800 0.200z" fill="url(#fb)"/>
<path d="M27.500 748.500q4.300 2 8.800 0l-1.700 8.600q-4.400 2-8.700-0.100z" fill="url(#fy)"/>
<!-- firefox -->
<ellipse cx="90" cy="761.500" rx="11" ry="2" fill="#5a6e88" opacity="0.350"/>
<circle cx="89.800" cy="743.800" r="11.900" fill="url(#globe)"/>
<path d="M84 734.500q5.500-2.500 10 0-2.500 1-3.500 2.800 3.500-0.300 6 2-3.500-0.300-5 1.500 1 2-0.500 4l-3.500-1.500-3 1.500-1.500-5z" fill="#d0f0ff" opacity="0.450"/>
<path d="M103 755A15.500 15.500 0 0 0 98.500 734.600L97.300 737.500 99.800 740.200 98 743.500 100.300 746.500 98.500 749.500 98.300 751 96.500 753 99 757.500z" fill="url(#foxt)"/>
<path d="M76.500 735.300L79.300 738.200 83 738.300 86.200 736.200 85.600 739.600 88.900 741.200 87.200 743.500 85.500 744.400 84.600 746.600 82.700 748.800Q86 752.200 92.300 749.800 90.800 752.800 85.800 753.400 88.500 755.300 94 754.600 96.500 753 98.300 751L103 755A15.500 15.500 0 0 1 74.300 743.500Q75 738.500 76.500 735.300z" fill="url(#fox)"/>
<path d="M86.300 741.200l2.400 0.200-1.500 1.800z" fill="#ffe8d0"/>
<path d="M75.500 752q4 8.500 13 10.200 8 0.500 13.500-6-6 4.500-13.500 3.500t-13-7.700z" fill="#b83406" opacity="0.550"/>
<!-- explorer -->
<path d="M131.500 762v-25.500q0-1.500 1.500-1.500h11q1 0 1.200 1.500l0.300 2h15.500q1.500 0 1.500 1.500v22z" fill="url(#fold)" stroke="#c8a850" stroke-width="0.800"/>
<path d="M140.500 740v-2q0-1 1-1h10.500q1 0 1 1v2" fill="#fdf2c0" stroke="#c8a850" stroke-width="0.700"/>
<path d="M148.500 742.500v-2q0-1 1-1h10.500q1 0 1 1v2" fill="#fdf2c0" stroke="#c8a850" stroke-width="0.700"/>
<rect x="134.500" y="735.800" width="3" height="2" fill="#18b828"/><rect x="138" y="735.800" width="5.500" height="2" fill="#fff"/>
<rect x="142.500" y="738.200" width="3" height="2" fill="#e02818"/><rect x="146" y="738.200" width="5.500" height="2" fill="#fff"/>
<rect x="150.500" y="740.500" width="3" height="2" fill="#1888f0"/><rect x="154" y="740.500" width="5.500" height="2" fill="#fff"/>
<path d="M132.500 743.500h29.500v18h-29.500z" fill="#f8e498" opacity="0.900"/>
<path d="M135 753q0-1.700 1.700-1.700h20.800q1.700 0 1.700 1.700v10.500h-6.700v-6.200h-10.800v6.200h-6.700z" fill="#8cc8f0" stroke="#3890d0" stroke-width="0.900" opacity="0.950"/>
<path d="M136 752.300h22.200v3.500h-22.200z" fill="#c8e8fc" opacity="0.800"/>
<path d="M138.500 746v10M134.500 753.500l8-6" stroke="#fff" stroke-width="0.800" opacity="0.900"/>
<!-- wmp -->
<path d="M222 739l2.500 1v20l-2.500 1zM219 738l2.500 1v22l-2.500 1z" fill="#b8d4ec" stroke="#6aa0cc" stroke-width="0.600"/>
<path d="M199.500 738l19.500-1v25l-19.500-2.500z" fill="#a8cce8" stroke="#5a98c8" stroke-width="0.800"/>
<circle cx="209.500" cy="749" r="8.500" fill="url(#wmp)" stroke="#e06008" stroke-width="0.600"/>
<path d="M206.500 743.500l9 5.500-9 5.500z" fill="#fff"/>
<!-- mail @ -->
<g fill="none" stroke="url(#mail)" stroke-linecap="round">
<circle cx="275" cy="748" r="5.800" stroke-width="3.400"/>
<path d="M281.300 742v7.500c0 3.500 2.300 4.500 4.300 3.800 2.500-0.900 3.200-4 3.100-6.300-0.300-7.500-6.200-13.200-13.700-13.200-7.600 0-13.700 6.200-13.700 13.900 0 7.600 6.100 13.700 13.700 13.700 3 0 5.600-0.800 7.800-2.300" stroke-width="3.200"/>
</g>
<!-- word -->
<path d="M317.500 738q0-6 6-6h20.500v22l-7 5h-19.500z" fill="url(#wordb)" stroke="#a0b8e0" stroke-width="0.800"/>
<path d="M319 738.500q0-5 5-5h18.500v3h-16q-4 0-4.500 4l-1.500 16h-1.500z" fill="#d8e4f8" opacity="0.800"/>
<path d="M327 736l21.500 2-2.500 24-22.500-3.500z" fill="#f4f7fc" stroke="#b0bcd0" stroke-width="0.600"/>
<text transform="translate(327.800 749.500) rotate(5) skewX(-12)" font-family="Liberation Sans,sans-serif" font-weight="bold" font-size="12.500" fill="#2848a8">W</text>
<path d="M340.500 741.300l5 0.500M340.300 743.600l5 0.500M340.100 745.900l5 0.500M339.900 748.200l5 0.500" stroke="#18309a" stroke-width="1.300"/><path d="M327.500 751.300l16.500 1.700M327.200 754.300l16.500 1.700" stroke="#18309a" stroke-width="1.600"/>
<!-- notepad -->
<path d="M409 737.500l3.500 2.500 1 19-4 3z" fill="#c89838" stroke="#a07828" stroke-width="0.500"/>
<path d="M405.500 742l5-4.500 1.500 22.500-6 2.500z" fill="#f4f6f8" stroke="#b8c0c8" stroke-width="0.500"/>
<path d="M394.500 735l16 2.500-5 24.500-22.500-7.500z" fill="url(#note)" stroke="#6ab0c8" stroke-width="0.500"/>
<path d="M394.500 735l16 2.500-0.500 2-16.300-2.800z" fill="#8a9098"/>
<path d="M391 756.500l14 5 6-2.500 1 1.500-7 3-15.500-5.500z" fill="#e4e8ec" stroke="#b0b8c0" stroke-width="0.400"/>
<!-- djvu -->
<path d="M451.500 732h23.500v24.500l-7 7h-16.500z" fill="url(#djv)"/>
<path d="M468 763.500v-7h7z" fill="#dcd0f4"/>
<path d="M452.500 733.500l11.500 13M456 732.500l10.500 12" stroke="#fff" stroke-width="1.500"/><path d="M452.500 737.500l9 10" stroke="#fff" stroke-width="1.200"/>
<path d="M462.500 745.500l6-5 3.500 6-5 4.500z" fill="#f8a010"/><circle cx="463.500" cy="745.500" r="1.500" fill="#fff"/>
<rect x="445.500" y="751.500" width="16.500" height="7.500" fill="#f8a810" stroke="#c07800" stroke-width="0.600"/>
<text x="446.300" y="758" font-family="Liberation Sans,sans-serif" font-weight="bold" font-size="7.500" fill="#000" textLength="15" lengthAdjust="spacingAndGlyphs">DjVu</text>
<!-- calc -->
<rect x="511.500" y="733.500" width="22" height="29" rx="1.500" fill="url(#calc)" stroke="#4a98d8" stroke-width="1"/>
<rect x="514" y="736" width="17" height="2" fill="#f8a820"/><rect x="514" y="738" width="17" height="8" fill="#f0f6fc" stroke="#7ab0e0" stroke-width="0.600"/>
<text x="525" y="745" font-family="Liberation Mono,monospace" font-size="8" fill="#3858a8">0</text>
<g fill="#fff"><rect x="514" y="752" width="2" height="2"/><rect x="517.200" y="752" width="2" height="2"/><rect x="520.400" y="752" width="2" height="2"/><rect x="514" y="755.200" width="2" height="2"/><rect x="517.200" y="755.200" width="2" height="2"/><rect x="520.400" y="755.200" width="2" height="2"/><rect x="514" y="758.400" width="2" height="2"/><rect x="517.200" y="758.400" width="2" height="2"/><rect x="520.400" y="758.400" width="2" height="2"/></g>
<g fill="#3c88c8"><rect x="514" y="748.800" width="2" height="2"/><rect x="517.200" y="748.800" width="2" height="2"/><rect x="520.400" y="748.800" width="2" height="2"/><rect x="523.600" y="748.800" width="2" height="2"/><rect x="526.800" y="748.800" width="2" height="2"/><rect x="523.600" y="752" width="2" height="2"/><rect x="526.800" y="752" width="2" height="2"/><rect x="523.600" y="755.200" width="2" height="2"/><rect x="523.600" y="758.400" width="2" height="2"/><rect x="526.800" y="758.400" width="2" height="2"/><rect x="529.500" y="748.800" width="2" height="2"/></g>
<rect x="529" y="755" width="2" height="5.500" fill="#f89010"/>
<!-- M -->
<text x="569" y="763.300" font-family="Liberation Sans,sans-serif" font-weight="bold" font-size="36.500" fill="url(#mg)" stroke="#3c5c76" stroke-width="1.300" stroke-linejoin="miter" textLength="32.500" lengthAdjust="spacingAndGlyphs">M</text><path d="M567.500 737h5v2.500h-3.500z" fill="#a4b0ba"/>
<!-- kompas -->
<path d="M646.700 732l15.900 9v15.300l-15.900 7.900-15.200-7.900v-15.300z" fill="#fdfdfd" stroke="#80858e" stroke-width="0.900"/>
<path d="M646.700 733v5M632 756l3-1.500M662 756l-3-1.500" stroke="#c8ccd0" stroke-width="0.600"/>
<path d="M633.400 745.500v5c0 4.200 6.200 7.500 14 7.500s14-3.300 14-7.500v-5z" fill="url(#kring)"/>
<ellipse cx="647.400" cy="745.500" rx="14" ry="7.400" fill="#2f84ea"/>
<ellipse cx="647.400" cy="745.900" rx="10.200" ry="4.800" fill="#0c3e98"/>
<path d="M640.300 741.800v8M640.800 746.200l15-5.200M644.500 745.300l12.500 6.200" stroke="#3d98f2" stroke-width="2.600" fill="none"/>
<path d="M636 743q4-4 11.500-4.300" stroke="#8cc8fc" stroke-width="0.900" fill="none" opacity="0.800"/>
<path d="M656.800 752v5" stroke="#0c3e98" stroke-width="1.600"/>
<!-- tray -->
<g font-family="Liberation Sans,sans-serif" fill="#f4f7fb">
<text x="1128.500" y="749.800" font-size="11.500" textLength="15" lengthAdjust="spacingAndGlyphs">RU</text>
<text x="1313" y="745" font-size="12" text-anchor="middle" textLength="26.500" lengthAdjust="spacingAndGlyphs" fill="#fff">22:44</text>
<text x="1312.500" y="761.500" font-size="12" text-anchor="middle" textLength="54" lengthAdjust="spacingAndGlyphs" fill="#fff">05.12.2010</text>
</g>
<path d="M1159 751.500l4.300-4.800 4.300 4.800z" fill="#fff" stroke="#5a6a80" stroke-width="0.500"/>
<circle cx="1187.600" cy="748.400" r="6.900" fill="#fff" stroke="#2a5cd8" stroke-width="1.300"/>
<path d="M1183 752a6.800 6.800 0 0 0 9.500 0.500q-4.500 2-9.500-0.500z" fill="#c4d0e4"/><path d="M1190.800 741.500l-6.600 7.800h3.600l-2.800 6 7.400-8.800h-3.800z" fill="#1c50d0" stroke="#1c50d0" stroke-width="0.700" stroke-linejoin="round"/>
<!-- power -->
<path d="M1207 743.500h4.500M1206 744.500v10.500M1207 756h7M1212.500 744.500v1" stroke="#222" stroke-width="2.800" fill="none" stroke-linecap="round"/>
<path d="M1207 743.500h4.500M1206 744.500v10.500M1207 756h7M1212.500 744.500v1" stroke="#fff" stroke-width="1.400" fill="none" stroke-linecap="round"/>
<path d="M1211 744.500h8.500v3q0 3-3 3.500v5.800h-2.500v-5.800q-3-0.500-3-3.500z" fill="#fff" stroke="#222" stroke-width="0.900"/>
<rect x="1212.500" y="740.800" width="2" height="3.800" fill="#fff" stroke="#222" stroke-width="0.600"/><rect x="1216" y="740.800" width="2" height="3.800" fill="#fff" stroke="#222" stroke-width="0.600"/>
<!-- network -->
<g fill="#fff" stroke="#3a4656" stroke-width="0.700"><rect x="1228.300" y="751.800" width="2.800" height="3"/><rect x="1231.500" y="749.800" width="2.800" height="5"/><rect x="1234.700" y="747.500" width="2.800" height="7.300"/><rect x="1237.900" y="745.200" width="2.800" height="9.600"/><rect x="1241.100" y="743" width="3" height="11.800"/></g>
<!-- speaker -->
<path d="M1254.500 745.500h3l4.500-4v14l-4.500-4h-3z" fill="#fff" stroke="#3a4656" stroke-width="0.800"/>
<path d="M1264 745q2.500 3.500 0 7" fill="none" stroke="#fff" stroke-width="1.200"/>
<!-- show desktop -->
<rect x="1352.500" y="728.500" width="14" height="40" fill="#9db2cb" stroke="#4c5c72" stroke-width="1"/>
<rect x="1353.500" y="729.500" width="12" height="38" fill="none" stroke="#c0d0e2" stroke-width="1" opacity="0.700"/>
<path d="M1354 748q6-9 12-8v-10h-12z" fill="#7f95af" opacity="0.750"/>
</svg>
</body>
</html>
